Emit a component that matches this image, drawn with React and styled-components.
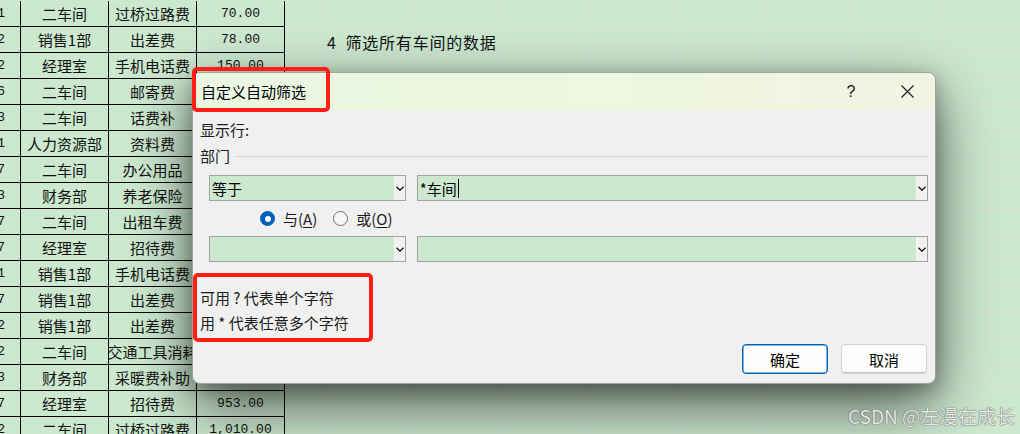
import React from "react";
import styled, { createGlobalStyle } from "styled-components";

const CJK = `"Noto Sans CJK SC", "Noto Sans", sans-serif`;
const MONO = `"Liberation Mono", "Noto Sans CJK SC", monospace`;

const Global = createGlobalStyle`
  html, body { margin: 0; padding: 0; }
  body {
    width: 1020px;
    height: 434px;
    overflow: hidden;
    background: #cce8cf;
    font-family: ${CJK};
    color: #000;
  }
`;

const Page = styled.div`
  position: relative;
  width: 1020px;
  height: 434px;
  overflow: hidden;
`;

const Sheet = styled.div`
  display: flex;
  flex-direction: column;
  padding-top: 1px;
`;

const Row = styled.div`
  display: flex;
`;

const Cell = styled.div`
  flex: none;
  box-sizing: border-box;
  width: ${(p) => p.$w}px;
  height: 26px;
  border-right: 1px solid ${(p) => (p.$grid ? "#d6ded6" : "#000")};
  border-bottom: 1px solid ${(p) => (p.$grid ? "#d6ded6" : "#000")};
  display: flex;
  align-items: center;
  justify-content: ${(p) => p.$align || "center"};
  padding: ${(p) => p.$pad || "0"};
  overflow: ${(p) => (p.$visible ? "visible" : "hidden")};
  white-space: nowrap;
  font-family: ${(p) => (p.$mono ? MONO : CJK)};
  font-size: ${(p) => (p.$mono ? "13px" : "15px")};
  color: #111;
`;

const NoteText = styled.span`
  font-family: ${CJK};
  font-size: 16px;
  letter-spacing: 0.8px;
  white-space: pre;
  color: #111;
  margin-top: 5px;
`;

/* ---------- dialog ---------- */
const Dialog = styled.div`
  position: absolute;
  left: 192px;
  top: 72px;
  width: 744px;
  height: 312px;
  box-sizing: border-box;
  border: 1px solid rgba(60, 70, 60, 0.45);
  border-radius: 8px;
  overflow: hidden;
  background: #f0f0f0;
  display: flex;
  flex-direction: column;
  box-shadow: 0 22px 60px rgba(0, 0, 0, 0.6), 0 6px 20px rgba(0, 0, 0, 0.28);
`;

const TitleBar = styled.div`
  flex: none;
  height: 37px;
  display: flex;
  align-items: center;
  padding-left: 8px;
  background: linear-gradient(90deg, #e9f6e1 0%, #eef7df 55%, #f3f3e3 100%);
`;

const Title = styled.div`
  flex: 1;
  font-size: 15px;
  color: #000;
`;

const TitleButton = styled.div`
  width: 56px;
  height: 37px;
  display: flex;
  align-items: center;
  justify-content: center;
  font-family: "Liberation Sans", "Noto Sans", sans-serif;
  font-size: 16px;
  color: #1a1a1a;
`;

const Body = styled.div`
  flex: 1;
  display: flex;
  flex-direction: column;
  padding: 0 7px;
  font-size: 15px;
`;

const Label = styled.div`
  margin-top: 10px;
  height: 20px;
  line-height: 20px;
  color: #1a1a1a;
`;

const Group = styled.div`
  margin-top: 6px;
  height: 20px;
  display: flex;
  align-items: center;
  line-height: 20px;
  color: #1a1a1a;
`;

const GroupLine = styled.div`
  flex: 1;
  height: 1px;
  margin-left: 6px;
  margin-top: 1px;
  background: #d5d5d5;
`;

const CriteriaRow = styled.div`
  display: flex;
  gap: 11px;
  padding-left: 9px;
  margin-top: ${(p) => p.$mt || 0}px;
`;

const Combo = styled.div`
  width: ${(p) => p.$w}px;
  height: 26px;
  box-sizing: border-box;
  border: 1px solid #a3a3a3;
  display: flex;
  background: #f0f0f0;
`;

const ComboField = styled.div`
  flex: 1;
  background: #cce8cf;
  display: flex;
  align-items: center;
  padding-left: 2px;
  font-size: 15px;
  color: #000;
  border-right: 1px solid #f7f7f7;
`;

const ComboArrow = styled.div`
  width: 10px;
  display: flex;
  align-items: center;
  justify-content: center;
`;

const Caret = styled.span`
  display: inline-block;
  width: 1px;
  height: 19px;
  background: #000;
  margin-left: 1px;
`;

const RadioRow = styled.div`
  height: 35px;
  display: flex;
  align-items: center;
  padding-left: 60px;
`;

const RadioItem = styled.div`
  display: flex;
  align-items: center;
  gap: 8px;
  margin-right: 16px;
  color: #1a1a1a;
`;

const RadioDot = styled.span`
  width: 15px;
  height: 15px;
  box-sizing: border-box;
  border-radius: 50%;
  display: flex;
  align-items: center;
  justify-content: center;
  background: ${(p) => (p.$on ? "#005fb8" : "#f6f6f6")};
  border: 1px solid ${(p) => (p.$on ? "#005fb8" : "#707070")};
  &::after {
    content: "";
    display: ${(p) => (p.$on ? "block" : "none")};
    width: 6px;
    height: 6px;
    border-radius: 50%;
    background: #fff;
  }
`;

const Ul = styled.span`
  text-decoration: underline;
  text-underline-offset: 2px;
`;

const Hints = styled.div`
  margin-top: 23px;
  line-height: 25px;
  color: #1a1a1a;
  white-space: pre;
`;

const ButtonRow = styled.div`
  margin-top: 9px;
  display: flex;
  justify-content: flex-end;
  gap: 13px;
  padding-right: 1px;
`;

const Button = styled.div`
  width: 86px;
  height: 30px;
  box-sizing: border-box;
  border-radius: 4px;
  background: #fdfdfd;
  border: 1px solid ${(p) => (p.$primary ? "#0067c0" : "#d0d0d0")};
  box-shadow: ${(p) => (p.$primary ? "inset 0 0 0 0.5px #0067c0" : "inset 0 -1px 0 #c4c4c4")};
  display: flex;
  align-items: center;
  justify-content: center;
  font-size: 15px;
  color: #000;
`;

/* ---------- overlays ---------- */
const RedBox = styled.div`
  position: absolute;
  left: ${(p) => p.$x}px;
  top: ${(p) => p.$y}px;
  width: ${(p) => p.$w}px;
  height: ${(p) => p.$h}px;
  box-sizing: border-box;
  border: 4px solid #ff1e16;
  border-radius: 5px;
  pointer-events: none;
`;

const Watermark = styled.div`
  position: absolute;
  right: 5px;
  top: 403px;
  font-family: ${CJK};
  font-size: 19px;
  line-height: 26px;
  color: #e8eae8;
  text-shadow: 0 0 1px #5a5a5a, 0 0 1px #5a5a5a;
`;

const W = { A: 21, B: 88, C: 88, D: 88, E: 39, X: 88 };

const rows = [
  ["1", "二车间", "过桥过路费", "70.00"],
  ["2", "销售1部", "出差费", "78.00"],
  ["2", "经理室", "手机电话费", "150.00"],
  ["6", "二车间", "邮寄费", ""],
  ["3", "二车间", "话费补", ""],
  ["1", "人力资源部", "资料费", ""],
  ["7", "二车间", "办公用品", ""],
  ["3", "财务部", "养老保险", ""],
  ["7", "二车间", "出租车费", ""],
  ["7", "经理室", "招待费", ""],
  ["1", "销售1部", "手机电话费", ""],
  ["7", "销售1部", "出差费", ""],
  ["2", "销售1部", "出差费", ""],
  ["2", "二车间", "交通工具消耗", ""],
  ["3", "财务部", "采暖费补助", ""],
  ["7", "经理室", "招待费", "953.00"],
  ["2", "二车间", "过桥过路费", "1,010.00"],
];

const Chevron = () => (
  <svg width="8" height="5" viewBox="0 0 8 5">
    <path d="M0.5 0.8 L4 4.2 L7.5 0.8" fill="none" stroke="#111" strokeWidth="1.3" />
  </svg>
);

const CloseIcon = () => (
  <svg width="13" height="13" viewBox="0 0 13 13">
    <path d="M0.5 0.5 L12.5 12.5 M12.5 0.5 L0.5 12.5" stroke="#1a1a1a" strokeWidth="1.1" />
  </svg>
);

function SheetRow({ r, i }) {
  const extra = [];
  if (i === 1) {
    extra.push(
      <Cell key="note" $grid $w={W.X * 2} $align="flex-start" $pad="0 0 0 3px" $visible>
        <NoteText>{"4  筛选所有车间的数据"}</NoteText>
      </Cell>
    );
    for (let k = 0; k < 6; k++) extra.push(<Cell key={k} $grid $w={W.X} />);
  } else {
    for (let k = 0; k < 8; k++) extra.push(<Cell key={k} $grid $w={W.X} />);
  }
  return (
    <Row>
      <Cell $w={W.A} $mono $align="flex-end" $pad="0 15px 0 0">{r[0]}</Cell>
      <Cell $w={W.B}>{r[1]}</Cell>
      <Cell $w={W.C}>{r[2]}</Cell>
      <Cell $w={W.D} $mono>{r[3]}</Cell>
      <Cell $grid $w={W.E} />
      {extra}
    </Row>
  );
}

export default function App() {
  return (
    <Page>
      <Global />
      <Sheet>
        {rows.map((r, i) => (
          <SheetRow key={i} r={r} i={i} />
        ))}
      </Sheet>

      <Dialog>
        <TitleBar>
          <Title>自定义自动筛选</Title>
          <TitleButton>?</TitleButton>
          <TitleButton>
            <CloseIcon />
          </TitleButton>
        </TitleBar>
        <Body>
          <Label>显示行:</Label>
          <Group>
            部门
            <GroupLine />
          </Group>
          <CriteriaRow $mt={9}>
            <Combo $w={197}>
              <ComboField>等于</ComboField>
              <ComboArrow><Chevron /></ComboArrow>
            </Combo>
            <Combo $w={512}>
              <ComboField>
                *车间<Caret />
              </ComboField>
              <ComboArrow><Chevron /></ComboArrow>
            </Combo>
          </CriteriaRow>
          <RadioRow>
            <RadioItem>
              <RadioDot $on />
              <span>与(<Ul>A</Ul>)</span>
            </RadioItem>
            <RadioItem>
              <RadioDot />
              <span>或(<Ul>O</Ul>)</span>
            </RadioItem>
          </RadioRow>
          <CriteriaRow>
            <Combo $w={197}>
              <ComboField />
              <ComboArrow><Chevron /></ComboArrow>
            </Combo>
            <Combo $w={512}>
              <ComboField />
              <ComboArrow><Chevron /></ComboArrow>
            </Combo>
          </CriteriaRow>
          <Hints>
            <div>{"可用 ? 代表单个字符"}</div>
            <div>{"用 * 代表任意多个字符"}</div>
          </Hints>
          <ButtonRow>
            <Button $primary>确定</Button>
            <Button>取消</Button>
          </ButtonRow>
        </Body>
      </Dialog>

      <RedBox $x={192} $y={67} $w={138} $h={45} />
      <RedBox $x={193} $y={273} $w={180} $h={69} />
      <Watermark>CSDN @左漫在成长</Watermark>
    </Page>
  );
}
